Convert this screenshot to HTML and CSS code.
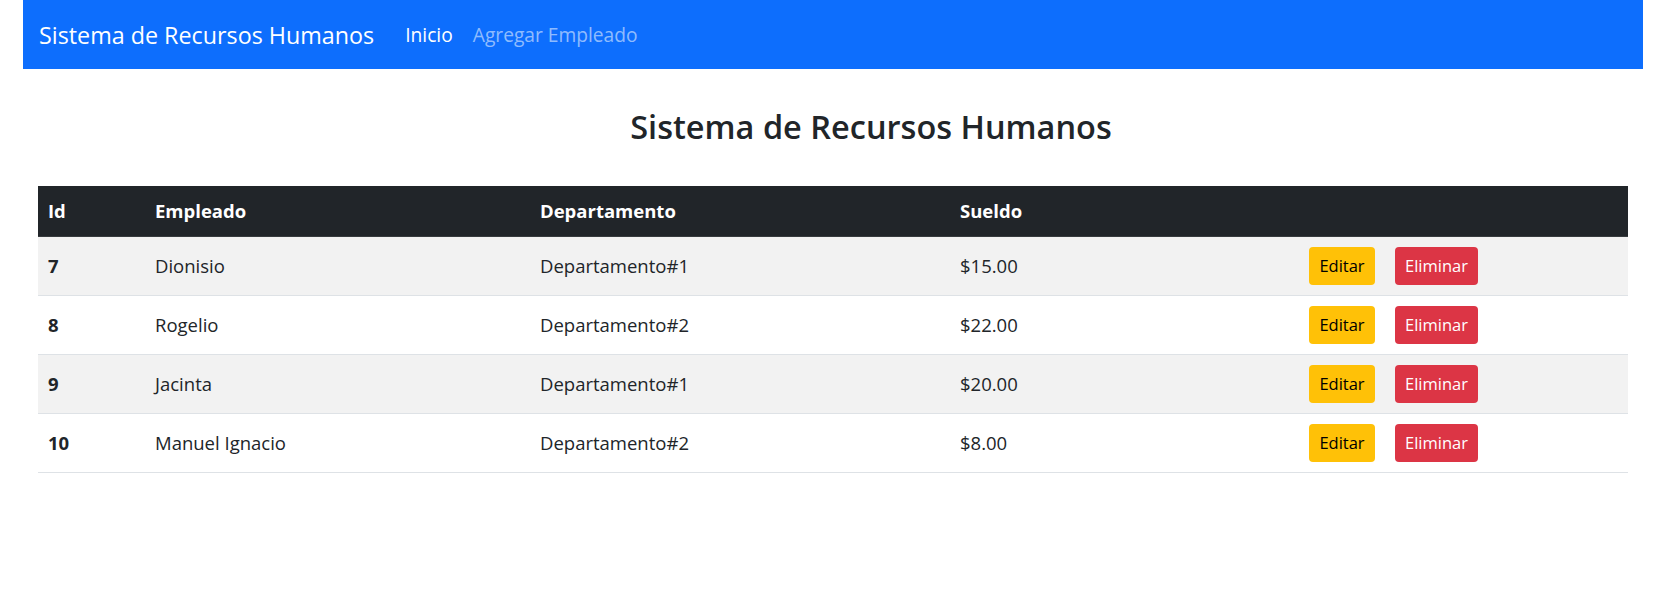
FILE: index.html
```html
<!DOCTYPE html>
<html lang="es">
<head>
<meta charset="utf-8">
<title>Sistema de Recursos Humanos</title>
<link rel="stylesheet" href="styles.css">
</head>
<body>
<div class="page">
  <nav class="navbar">
    <span class="brand">Sistema de Recursos Humanos</span>
    <a class="nav-link active" href="#">Inicio</a>
    <a class="nav-link" href="#">Agregar Empleado</a>
  </nav>
  <main class="main">
    <h3 class="title">Sistema de Recursos Humanos</h3>
    <table class="table">
      <colgroup>
        <col class="c-id"><col class="c-emp"><col class="c-dep"><col class="c-sue"><col class="c-act">
      </colgroup>
      <thead>
        <tr><th>Id</th><th>Empleado</th><th>Departamento</th><th>Sueldo</th><th></th></tr>
      </thead>
      <tbody>
        <tr class="odd"><th>7</th><td>Dionisio</td><td>Departamento#1</td><td>$15.00</td><td class="acts"><a class="btn btn-warning" href="#">Editar</a><a class="btn btn-danger" href="#">Eliminar</a></td></tr>
        <tr><th>8</th><td>Rogelio</td><td>Departamento#2</td><td>$22.00</td><td class="acts"><a class="btn btn-warning" href="#">Editar</a><a class="btn btn-danger" href="#">Eliminar</a></td></tr>
        <tr class="odd"><th>9</th><td>Jacinta</td><td>Departamento#1</td><td>$20.00</td><td class="acts"><a class="btn btn-warning" href="#">Editar</a><a class="btn btn-danger" href="#">Eliminar</a></td></tr>
        <tr><th>10</th><td>Manuel Ignacio</td><td>Departamento#2</td><td>$8.00</td><td class="acts"><a class="btn btn-warning" href="#">Editar</a><a class="btn btn-danger" href="#">Eliminar</a></td></tr>
      </tbody>
    </table>
  </main>
</div>
</body>
</html>
```
FILE: styles.css
```css
* { box-sizing: border-box; }
body {
  margin: 0;
  font-family: "Open Sans", "Noto Sans", sans-serif;
  color: #212529;
  background: #fff;
}
.page {
  margin-left: 23px;
  width: 1620px;
}
.navbar {
  height: 69px;
  background: #0d6efd;
  display: flex;
  align-items: center;
  padding-left: 16px;
}
.brand {
  font-size: 23.3px;
  color: #fff;
  margin-right: 21px;
}
.nav-link {
  font-size: 19.2px;
  color: rgba(255,255,255,0.55);
  text-decoration: none;
  padding: 0 10px;
}
.nav-link.active { color: #fff; }
.main {
  padding: 0 15px;
}
.title {
  margin: 37px 0 38px;
  font-size: 32.5px;
  font-weight: 600;
  line-height: 42px;
  text-align: center;
  padding-left: 76px;
}
.table {
  width: 100%;
  border-collapse: collapse;
  table-layout: fixed;
  font-size: 18.5px;
}
.c-id { width: 107px; }
.c-emp { width: 385px; }
.c-dep { width: 420px; }
.c-sue { width: 349px; }
.table th, .table td {
  text-align: left;
  padding: 0 10px;
  vertical-align: middle;
}
.table thead th {
  background: #212529;
  color: #fff;
  font-weight: 700;
  height: 50px;
  border-bottom: 1px solid #373b3e;
}
.table tbody th, .table tbody td {
  height: 59px;
  border-bottom: 1px solid #dee2e6;
}
.table tbody th { font-weight: 700; }
.table tbody tr.odd th, .table tbody tr.odd td { background: #f2f2f2; }
.acts {
  white-space: nowrap;
}
.btn {
  display: inline-flex;
  align-items: center;
  justify-content: center;
  height: 38px;
  padding: 0;
  font-size: 16.5px;
  border-radius: 4px;
  text-decoration: none;
  vertical-align: middle;
}
.btn-warning { background: #ffc107; color: #000; width: 66px; margin-right: 20px; }
.btn-danger { background: #dc3545; color: #fff; width: 83px; }
```
